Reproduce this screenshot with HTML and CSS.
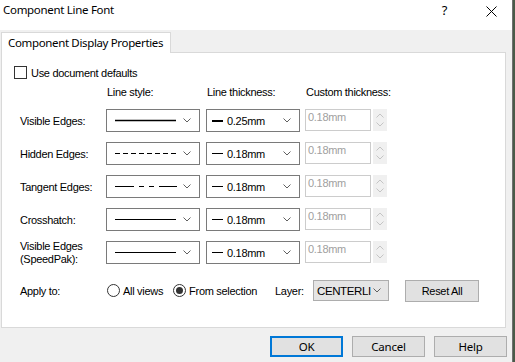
FILE: index.html
```html
<!DOCTYPE html>
<html lang="en">
  <head>
    <meta charset="UTF-8" />
    <title>Component Line Font</title>
    <link rel="stylesheet" href="styles.css">
  </head>
  <body>
    <div class="window">
      <div class="titlebar">
        <span class="title">Component Line Font</span>
        <span class="help-mark">?</span>
        <svg class="close-x" width="11" height="11" viewBox="0 0 11 11"><path d="M0.5 0.5L10.5 10.5M10.5 0.5L0.5 10.5" stroke="#000" stroke-width="1" fill="none"/></svg>
      </div>

      <div class="dialog-body">
        <div class="tabstrip">
          <div class="tab">Component Display Properties</div>
        </div>

        <div class="panel">
          <div class="check-row">
            <span class="checkbox"></span>
            <span>Use document defaults</span>
          </div>

          <div class="grid">
            <div></div>
            <div class="col-head">Line style:</div>
            <div class="col-head">Line thickness:</div>
            <div class="col-head">Custom thickness:</div>

            <!-- Visible Edges -->
            <div class="row-label">Visible Edges:</div>
            <div class="combo">
              <span class="combo-value"><svg width="62" height="3"><line x1="0" y1="1.5" x2="61" y2="1.5" stroke="#000" stroke-width="1.3"/></svg></span>
              <svg class="chev" width="8" height="5" viewBox="0 0 8 5"><path d="M0.5 0.5L4 4L7.5 0.5" stroke="#606060" fill="none"/></svg>
            </div>
            <div class="combo">
              <span class="combo-value"><i class="swatch thick"></i>0.25mm</span>
              <svg class="chev" width="8" height="5" viewBox="0 0 8 5"><path d="M0.5 0.5L4 4L7.5 0.5" stroke="#606060" fill="none"/></svg>
            </div>
            <div class="custom">
              <div class="field">0.18mm</div>
              <div class="spin">
                <svg width="8" height="5" viewBox="0 0 8 5"><path d="M0.5 4.5L4 1L7.5 4.5" stroke="#c4c4c4" fill="none"/></svg>
                <svg width="8" height="5" viewBox="0 0 8 5"><path d="M0.5 0.5L4 4L7.5 0.5" stroke="#c4c4c4" fill="none"/></svg>
              </div>
            </div>

            <!-- Hidden Edges -->
            <div class="row-label">Hidden Edges:</div>
            <div class="combo">
              <span class="combo-value"><svg width="62" height="3"><line x1="0" y1="1.5" x2="61" y2="1.5" stroke="#000" stroke-width="1" stroke-dasharray="5 3"/></svg></span>
              <svg class="chev" width="8" height="5" viewBox="0 0 8 5"><path d="M0.5 0.5L4 4L7.5 0.5" stroke="#606060" fill="none"/></svg>
            </div>
            <div class="combo">
              <span class="combo-value"><i class="swatch"></i>0.18mm</span>
              <svg class="chev" width="8" height="5" viewBox="0 0 8 5"><path d="M0.5 0.5L4 4L7.5 0.5" stroke="#606060" fill="none"/></svg>
            </div>
            <div class="custom">
              <div class="field">0.18mm</div>
              <div class="spin">
                <svg width="8" height="5" viewBox="0 0 8 5"><path d="M0.5 4.5L4 1L7.5 4.5" stroke="#c4c4c4" fill="none"/></svg>
                <svg width="8" height="5" viewBox="0 0 8 5"><path d="M0.5 0.5L4 4L7.5 0.5" stroke="#c4c4c4" fill="none"/></svg>
              </div>
            </div>

            <!-- Tangent Edges -->
            <div class="row-label">Tangent Edges:</div>
            <div class="combo">
              <span class="combo-value"><svg width="62" height="3"><line x1="0" y1="1.5" x2="62" y2="1.5" stroke="#000" stroke-width="1" stroke-dasharray="19 5 5 5 5 5 18"/></svg></span>
              <svg class="chev" width="8" height="5" viewBox="0 0 8 5"><path d="M0.5 0.5L4 4L7.5 0.5" stroke="#606060" fill="none"/></svg>
            </div>
            <div class="combo">
              <span class="combo-value"><i class="swatch"></i>0.18mm</span>
              <svg class="chev" width="8" height="5" viewBox="0 0 8 5"><path d="M0.5 0.5L4 4L7.5 0.5" stroke="#606060" fill="none"/></svg>
            </div>
            <div class="custom">
              <div class="field">0.18mm</div>
              <div class="spin">
                <svg width="8" height="5" viewBox="0 0 8 5"><path d="M0.5 4.5L4 1L7.5 4.5" stroke="#c4c4c4" fill="none"/></svg>
                <svg width="8" height="5" viewBox="0 0 8 5"><path d="M0.5 0.5L4 4L7.5 0.5" stroke="#c4c4c4" fill="none"/></svg>
              </div>
            </div>

            <!-- Crosshatch -->
            <div class="row-label">Crosshatch:</div>
            <div class="combo">
              <span class="combo-value"><svg width="62" height="3"><line x1="0" y1="1.5" x2="61" y2="1.5" stroke="#000" stroke-width="1"/></svg></span>
              <svg class="chev" width="8" height="5" viewBox="0 0 8 5"><path d="M0.5 0.5L4 4L7.5 0.5" stroke="#606060" fill="none"/></svg>
            </div>
            <div class="combo">
              <span class="combo-value"><i class="swatch"></i>0.18mm</span>
              <svg class="chev" width="8" height="5" viewBox="0 0 8 5"><path d="M0.5 0.5L4 4L7.5 0.5" stroke="#606060" fill="none"/></svg>
            </div>
            <div class="custom">
              <div class="field">0.18mm</div>
              <div class="spin">
                <svg width="8" height="5" viewBox="0 0 8 5"><path d="M0.5 4.5L4 1L7.5 4.5" stroke="#c4c4c4" fill="none"/></svg>
                <svg width="8" height="5" viewBox="0 0 8 5"><path d="M0.5 0.5L4 4L7.5 0.5" stroke="#c4c4c4" fill="none"/></svg>
              </div>
            </div>

            <!-- Visible Edges (SpeedPak) -->
            <div class="row-label two-line">Visible Edges<br>(SpeedPak):</div>
            <div class="combo">
              <span class="combo-value"><svg width="62" height="3"><line x1="0" y1="1.5" x2="61" y2="1.5" stroke="#000" stroke-width="1"/></svg></span>
              <svg class="chev" width="8" height="5" viewBox="0 0 8 5"><path d="M0.5 0.5L4 4L7.5 0.5" stroke="#606060" fill="none"/></svg>
            </div>
            <div class="combo">
              <span class="combo-value"><i class="swatch"></i>0.18mm</span>
              <svg class="chev" width="8" height="5" viewBox="0 0 8 5"><path d="M0.5 0.5L4 4L7.5 0.5" stroke="#606060" fill="none"/></svg>
            </div>
            <div class="custom">
              <div class="field">0.18mm</div>
              <div class="spin">
                <svg width="8" height="5" viewBox="0 0 8 5"><path d="M0.5 4.5L4 1L7.5 4.5" stroke="#c4c4c4" fill="none"/></svg>
                <svg width="8" height="5" viewBox="0 0 8 5"><path d="M0.5 0.5L4 4L7.5 0.5" stroke="#c4c4c4" fill="none"/></svg>
              </div>
            </div>
          </div>

          <div class="apply-row">
            <span class="apply-label">Apply to:</span>
            <span class="radio"></span>
            <span class="radio-text">All views</span>
            <span class="radio checked"></span>
            <span class="radio-text">From selection</span>
            <span class="layer-label">Layer:</span>
            <div class="layer-combo">
              <span class="layer-value">CENTERLI</span>
              <svg class="chev" width="8" height="5" viewBox="0 0 8 5"><path d="M0.5 0.5L4 4L7.5 0.5" stroke="#606060" fill="none"/></svg>
            </div>
            <button class="reset-btn">Reset All</button>
          </div>
        </div>

        <div class="footer">
          <button class="btn default">OK</button>
          <button class="btn">Cancel</button>
          <button class="btn">Help</button>
        </div>
      </div>
    </div>
  </body>
</html>
```

FILE: styles.css
```css
body {
  margin: 0;
  padding: 0;
  background-color: #4a5a48; /* area beyond the window */
  font-family: "Liberation Sans", Arial, sans-serif;
  font-size: 11px;
  letter-spacing: -0.3px;
  color: #000;
}
.window {
  width: 512px;
  height: 362px;
  border-right: 1px solid #707070;
  background-color: #f0f0f0;
  display: flex;
  flex-direction: column;
  overflow: hidden;
}
.titlebar {
  height: 30px;
  background-color: #fff;
  display: flex;
  align-items: flex-start;
  padding: 2px 15px 0 3px;
  box-sizing: border-box;
  font-family: "Noto Sans", "Open Sans", sans-serif;
  font-size: 11.5px;
  letter-spacing: -0.3px;
}
.title {
  line-height: 16px;
}
.help-mark {
  margin-left: auto;
  line-height: 16px;
  font-size: 13px;
}
.close-x {
  margin-left: 39px;
  margin-top: 4px;
}
.dialog-body {
  flex: 1;
  display: flex;
  flex-direction: column;
}
.tabstrip {
  padding: 2px 0 0 1px;
  display: flex;
}
.tab {
  height: 21px;
  box-sizing: border-box;
  width: 170px;
  white-space: nowrap;
  margin-bottom: -1px;
  border: 1px solid #d9d9d9;
  border-bottom: none;
  background-color: #fff;
  position: relative;
  z-index: 1;
  padding-left: 6px;
  font-family: "Noto Sans", "Open Sans", sans-serif;
  font-size: 11.5px;
  letter-spacing: -0.35px;
  line-height: 20px;
}
.panel {
  margin-left: 1px;
  width: 505px;
  height: 276px;
  box-sizing: border-box;
  border: 1px solid #d9d9d9;
  background-color: #fff;
  padding: 13px 0 0 12px;
}
.check-row {
  display: flex;
  align-items: center;
  height: 13px;
}
.checkbox {
  width: 13px;
  height: 13px;
  box-sizing: border-box;
  border: 1px solid #333;
  margin-right: 4px;
}
.grid {
  display: grid;
  grid-template-columns: 86px 100px 99px auto;
  grid-template-rows: 13px repeat(5, 23px);
  row-gap: 10px;
  margin: 7px 0 0 6px;
}
.col-head {
  line-height: 13px;
  padding-left: 1px;
}
.row-label {
  display: flex;
  align-items: center;
}
.two-line {
  line-height: 13px;
}
.combo {
  width: 94px;
  height: 23px;
  box-sizing: border-box;
  border: 1px solid #7a7a7a;
  background-color: #fff;
  display: flex;
  align-items: center;
  padding: 0 8px 0 8px;
}
.combo-value {
  flex: 1;
  display: flex;
  align-items: center;
}
.swatch {
  display: inline-block;
  width: 11px;
  height: 1px;
  background-color: #000;
  margin: 0 4px 0 -3px;
}
.swatch.thick {
  height: 2px;
}
.chev {
  flex: none;
}
.custom {
  display: flex;
  gap: 2px;
}
.field {
  width: 66px;
  height: 22px;
  box-sizing: border-box;
  border: 1px solid #cccccc;
  color: #a0a0a0;
  padding: 1px 2px;
  line-height: 13px;
}
.spin {
  width: 14px;
  height: 22px;
  background-color: #f0f0f0;
  display: flex;
  flex-direction: column;
  justify-content: space-around;
  align-items: center;
  padding: 2px 0;
  box-sizing: border-box;
}
.apply-row {
  display: flex;
  align-items: center;
  height: 21px;
  margin: 16px 0 0 6px;
}
.apply-label {
  width: 87px;
}
.radio {
  width: 13px;
  height: 13px;
  box-sizing: border-box;
  border: 1px solid #333;
  border-radius: 50%;
  display: flex;
  align-items: center;
  justify-content: center;
}
.radio.checked::after {
  content: "";
  width: 7px;
  height: 7px;
  border-radius: 50%;
  background-color: #333;
}
.radio-text {
  margin: 0 10px 0 3px;
}
.layer-label {
  margin-left: 8px;
  width: 38px;
}
.layer-combo {
  width: 76px;
  height: 21px;
  box-sizing: border-box;
  border: 1px solid #adadad;
  background-color: #e5e5e5;
  display: flex;
  align-items: center;
  padding: 0 7px 0 3px;
}
.layer-value {
  white-space: nowrap;
  font-size: 11.5px;
  letter-spacing: -0.4px;
  margin-right: auto;
}
.reset-btn {
  margin-left: 16px;
  width: 74px;
  height: 22px;
  border: 1px solid #adadad;
  background-color: #e1e1e1;
  font-family: inherit;
  font-size: 11px;
  letter-spacing: -0.3px;
  padding: 0;
  color: #000;
}
.footer {
  display: flex;
  justify-content: flex-end;
  gap: 9px;
  padding: 8px 5px 0 0;
}
.btn {
  width: 73px;
  height: 21px;
  border: 1px solid #adadad;
  background-color: #e1e1e1;
  font-family: "Noto Sans", "Open Sans", sans-serif;
  font-size: 11.5px;
  letter-spacing: -0.2px;
  padding: 0;
  color: #000;
}
.btn.default {
  border: 2px solid #0078d7;
}
```
